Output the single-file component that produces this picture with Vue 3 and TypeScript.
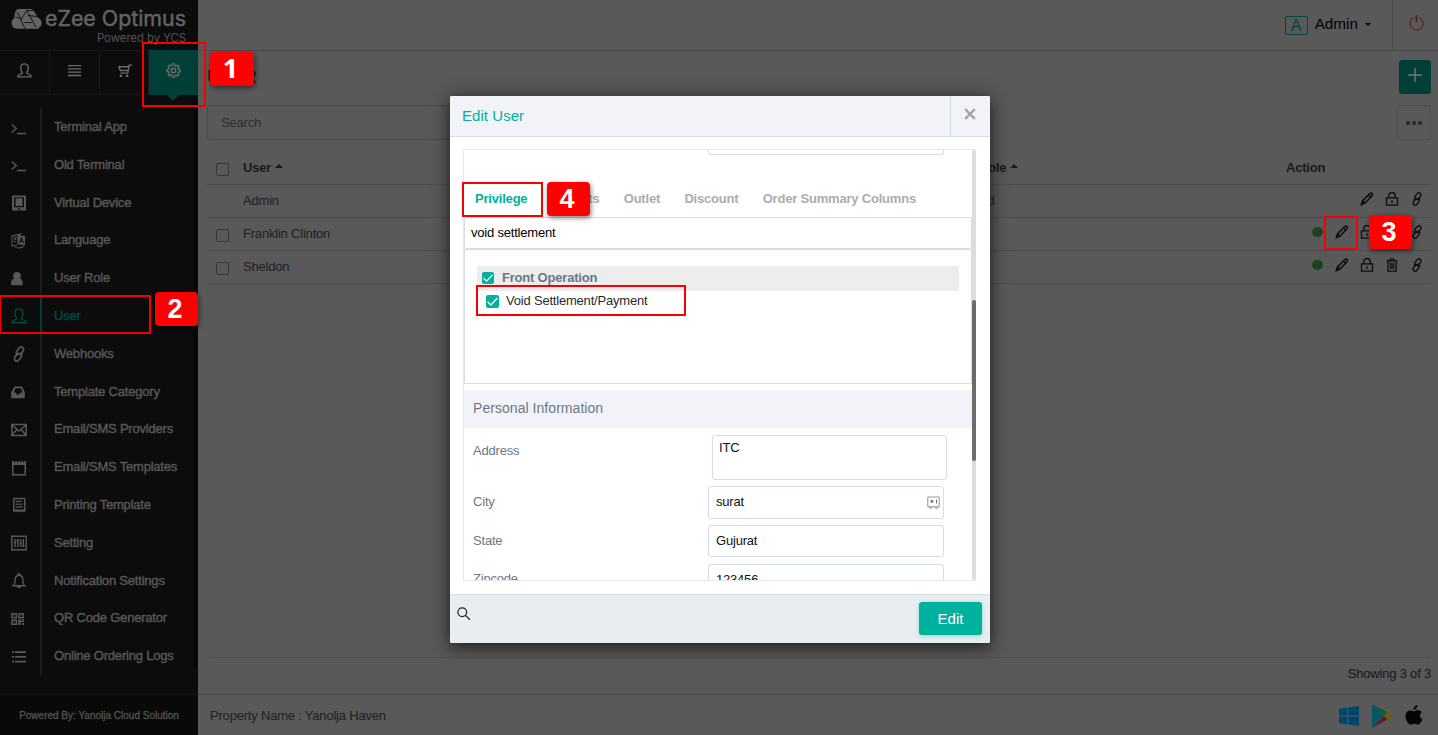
<script setup lang="ts">
interface Icon {
  stroke?: string
  fill?: string
  width?: number
}
interface MenuItem {
  label: string
  icon: string
  active?: boolean
}
interface UserRow {
  name: string
  checkbox: boolean
  actions: string[]
}

const icons: Record<string, Icon> = {
  user: { stroke: 'M1 14.700V13.600c0-1.700 4.700-1.300 4.700-3.100C4.400 9 3.900 7.600 4 5.200 4.100 2.400 5.600.9 8 .9s3.900 1.500 4 4.300c.1 2.400-.4 3.800-1.700 5.300 0 1.800 4.700 1.400 4.700 3.100v1.100z', width: 1.4 },
  bars: { fill: 'M1 2h14v1.500H1zM1 5.500h14V7H1zM1 9h14v1.500H1zM1 12.500h14V14H1z' },
  cart: { fill: 'M15.700 1.500v1.700h-2L12.300 10l-.3 1.500H3.700V10h7.200l.3-1.300H3L1 3.200h11l.4-1.700zM3.200 4.700l.9 2.500h7.300l.4-2.500zM3 12.500h2.500V15H3zM9.500 12.500H12V15H9.500z' },
  gear: { stroke: 'M6.900 1h2.200l.4 1.900 1.200.5 1.600-1.100 1.500 1.500-1.100 1.600.5 1.200 1.900.4v2.200l-1.900.4-.5 1.200 1.100 1.600-1.500 1.500-1.600-1.100-1.200.5L9.100 15H6.900l-.4-1.900-1.200-.5-1.600 1.100-1.500-1.500 1.100-1.600-.5-1.200L.9 9V6.900l1.900-.4.5-1.200-1.100-1.600 1.500-1.500 1.600 1.100 1.200-.5zM10.400 8a2.400 2.400 0 1 1-4.800 0 2.400 2.400 0 0 1 4.800 0z', width: 1.4 },
  terminal: { stroke: 'M.8 4.500l4.400 4-4.400 4M6 13.500h9.200', width: 1.5 },
  tablet: { fill: 'M2 .5h12q1 0 1 1v13q0 1-1 1H2q-1 0-1-1v-13q0-1 1-1zM3 2.200v10h10v-10zM4.500 3.300h7v7.800h-7zM6.800 13.200h2.600v1.200H6.800z' },
  language: { fill: 'M6.500 2l7.500 1.200v9.300L6.500 11zM10 4.400L7.900 9.700l1.200.2.4-1.200 1.900.3.5 1.300 1.200.2L11 4.600zM10.300 6l.7 1.900-1.300-.2zM.5 2.500l10-2.200v1.200L1.500 3.500v9l5-1v1L.5 13.700zM3 4.500l3-.6V5H4.800l.8 1.500-.7.700-.6-1L3.500 8l1.500.7-.4 1-2-1L3.500 5.500 3 5.400zM3 13.500q5 2.500 9.500-.7v1.100q-4.500 3-9.500.2z' },
  person: { fill: 'M6 1a3.700 3.700 0 0 1 2.600 6.500C11 7.900 11.700 9.500 11.700 12v1.300q0 1-1 1H1.100q-1 0-1-1V12C.1 9.500.9 7.900 3.400 7.500A3.700 3.700 0 0 1 6 1z' },
  link: { stroke: 'M6.700 9.300C4.400 8 5 6.300 6.200 4.500l1.500-2c1-1.400 2.300-2 3.700-1.200s1.500 2.300.6 3.700l-1.500 2.200c-.9 1.300-2 1.700-3.100 1.100M9.300 6.700c2.300 1.300 1.700 3 .5 4.800l-1.500 2c-1 1.400-2.300 2-3.700 1.200s-1.500-2.300-.6-3.700l1.500-2.200c.9-1.300 2-1.700 3.100-1.100', width: 1.6 },
  inbox: { fill: 'M3.500 2.500h7.500L13.800 8.500v5q0 .8-.8.800H1q-.8 0-.8-.8v-5zM4.500 4.300L2.700 8.500h2.100l1 1.900h2.700l1-1.900h2L10 4.300z' },
  mail: { stroke: 'M.8 2.500h14.400v11H.8zM1 3l7 6 7-6M1 13l5-5.500M15 13l-5-5.500', width: 1.5 },
  notes: { fill: 'M1 1h14v14.500H1zM2.500 5v9h11V5zM3 1v1.500h1.300V1zM6 1v1.500h1.300V1zM9 1v1.500h1.300V1zM12 1v1.500h1.300V1z' },
  receipt: { fill: 'M2 .8h12.500v14.500l-1.600-1-1.500 1-1.500-1-1.500 1-1.500-1-1.500 1-1.500-1-1.700 1zM3.500 2.300v10.200H13V2.300zM4.700 3.700h6V5h-6zM4.700 6.400h7v1.300h-7zM4.700 9.200h7v1.300h-7z' },
  sliders: { stroke: 'M.8 1.200h14.400v13.600H.8zM4 4v8M6.800 4v8M9.600 4v8M12.300 4v8M2.800 7.500h2.400M5.700 5.500h2.200M8.500 8.500h2.200M11 10.800h2.600', width: 1.4 },
  bell: { stroke: 'M1.200 12.800h13.600M2.800 12.500c1.200-1.500 1-2.800 1.200-5C4.200 4.200 5.700 2.300 8 2.300s3.800 1.900 4 5.200c.2 2.200 0 3.500 1.200 5M7.300 2.200V1h1.400v1.200M6.400 13.500c.6 1.500 2.600 1.500 3.200 0', width: 1.4 },
  qr: { fill: 'M.2 2h6v5.500h-6zM1.700 3.500V6h3V3.500zM7.200 2h5.700v5.500H7.200zM8.700 3.500V6h2.700V3.500zM.2 8.500h6V14h-6zM1.700 10v2.500h3V10zM7.200 8.500H10V10h1V8.500h2V11H9.500v3H7.200zM11 12h2v2h-2zM2.700 4.300h1v1h-1zM9.600 4.300h1v1h-1zM2.700 10.800h1v1h-1z' },
  list: { fill: 'M1 2.300h2v1.800H1zM4 2.300h11v1.800H4zM1 7h2v1.800H1zM4 7h11v1.800H4zM1 11.700h2v1.800H1zM4 11.700h11v1.800H4z' },
  pencil: { stroke: 'M1.600 14.400l1.300-4.200 8-8.200c1-.9 1.900-1.100 2.800-.3s.7 1.800-.2 2.800l-7.900 8.300zM10 3.700l2.300 2.100M3 10.300l2.400 2.400M1.700 14.300l1.700-.5', width: 1.800 },
  lock: { stroke: 'M1.700 6.800h12.600v8.200H1.700zM4.300 6.800V4.300a3.700 3.700 0 0 1 7.400 0v2.500M8 9.500v3', width: 1.5 },
  trash: { stroke: 'M1.800 3.200h12.400M5.700 3V1.200h4.600V3M3.200 3.500V15h9.600V3.500M6 5.500v7M8 5.500v7M10 5.500v7', width: 1.4 },
  search: { stroke: 'M11 6a5 5 0 1 1-10 0 5 5 0 0 1 10 0zM9.700 9.600l5 5', width: 1.4 },
}

const tabs: string[] = ['user', 'bars', 'cart', 'gear']

const menu: MenuItem[] = [
  { label: 'Terminal App', icon: 'terminal' },
  { label: 'Old Terminal', icon: 'terminal' },
  { label: 'Virtual Device', icon: 'tablet' },
  { label: 'Language', icon: 'language' },
  { label: 'User Role', icon: 'person' },
  { label: 'User', icon: 'user', active: true },
  { label: 'Webhooks', icon: 'link' },
  { label: 'Template Category', icon: 'inbox' },
  { label: 'Email/SMS Providers', icon: 'mail' },
  { label: 'Email/SMS Templates', icon: 'notes' },
  { label: 'Printing Template', icon: 'receipt' },
  { label: 'Setting', icon: 'sliders' },
  { label: 'Notification Settings', icon: 'bell' },
  { label: 'QR Code Generator', icon: 'qr' },
  { label: 'Online Ordering Logs', icon: 'list' },
]

const users: UserRow[] = [
  { name: 'Admin', checkbox: false, actions: ['pencil', 'lock', 'link'] },
  { name: 'Franklin Clinton', checkbox: true, actions: ['dot', 'pencil', 'lock', 'trash', 'link'] },
  { name: 'Sheldon', checkbox: true, actions: ['dot', 'pencil', 'lock', 'trash', 'link'] },
]

const privilegeTabs: string[] = ['Privilege', 'Reports', 'Outlet', 'Discount', 'Order Summary Columns']
</script>

<template>
  <div class="page">
    <aside class="side">
      <svg class="logo" viewBox="0 0 198 50">
        <path d="M19 9h11.500q2.200 0 3.400 2l3.900 6.500a5.700 5.700 0 0 1-4.300 11.200H17.500A5.600 5.600 0 0 1 14 18.500l1-5.500q1-4 4-4z" fill="#636363" />
        <path d="M15.500 17.200q3.200-.4 5 2.300l4.500 8.800M17 12l4.500 7.500M33.500 10.500l-6.800 0-5.600 9M26.700 10.500l9.500 17M24.500 22.500h7.500M28 15.500l8.700 1" stroke="#0c0c0c" stroke-width=".9" fill="none" />
        <text x="45" y="26" font-size="21" textLength="141" lengthAdjust="spacingAndGlyphs" stroke="#646464" stroke-width=".45">eZee Optimus</text>
        <text x="97" y="42" font-size="12" font-weight="300" textLength="89" lengthAdjust="spacingAndGlyphs">Powered by YCS</text>
      </svg>
      <nav class="tabs">
        <div v-for="t in tabs" :key="t" class="tab" :class="{ on: t === 'gear' }">
          <svg viewBox="0 0 16 16">
            <path v-if="icons[t].stroke" :d="icons[t].stroke" :stroke-width="icons[t].width" class="line" />
            <path v-if="icons[t].fill" :d="icons[t].fill" class="solid" />
          </svg>
        </div>
      </nav>
      <div class="menu">
        <div v-for="m in menu" :key="m.label" class="item" :class="{ active: m.active }">
          <div class="ico">
            <svg viewBox="0 0 16 16">
              <path v-if="icons[m.icon].stroke" :d="icons[m.icon].stroke" :stroke-width="icons[m.icon].width" class="line" />
              <path v-if="icons[m.icon].fill" :d="icons[m.icon].fill" class="solid" />
            </svg>
          </div>
          <span>{{ m.label }}</span>
        </div>
        <i class="rail"></i>
      </div>
      <div class="powered">Powered By: Yanolja Cloud Solution</div>
    </aside>

    <main class="main">
      <header class="top">
        <span class="avatar">A</span><span class="who">Admin</span><i class="caret"></i>
        <div class="power">
          <svg viewBox="0 0 18 18"><path d="M6 2.700a7 7 0 1 0 6 0" fill="none" stroke="#5b2625" stroke-width="1.300" /><path d="M9 .5v7" stroke="#5b1d1c" stroke-width="2" /></svg>
        </div>
      </header>
      <section class="content">
        <div class="title"><span>USER</span>
          <button class="add"><svg viewBox="0 0 14 14"><path d="M7 0v14M0 7h14" stroke="#777" stroke-width="1.400" /></svg></button>
        </div>
        <div class="filter"><div class="search">Search</div><div class="more"><i></i><i></i><i></i></div></div>
        <div class="row head">
          <div class="check"><i></i></div>
          <div class="name">User<i class="up"></i></div>
          <div class="role">Role<i class="up"></i></div>
          <div class="act">Action</div>
        </div>
        <div v-for="u in users" :key="u.name" class="row">
          <div class="check"><i v-if="u.checkbox"></i></div>
          <div class="name">{{ u.name }}</div>
          <div class="role"><template v-if="u.name === 'Admin'">Ad</template></div>
          <div class="acts">
            <template v-for="a in u.actions" :key="a">
              <i v-if="a === 'dot'" class="dot"></i>
              <svg v-else viewBox="0 0 16 16"><path :d="icons[a].stroke" :stroke-width="icons[a].width" class="line" /></svg>
            </template>
          </div>
        </div>
        <div class="fillspace"></div>
        <div class="showing">Showing 3 of 3</div>
      </section>
      <footer class="foot">
        <span>Property Name : Yanolja Haven</span>
        <div class="stores">
          <svg width="20" height="20" viewBox="0 0 20 20"><path fill="#00466b" d="M0 2.800l8.200-1.200v7.900H0zM9.200 1.400L20 0v9.500H9.200zM0 10.500h8.200v7.900L0 17.200zM9.200 10.500H20V20L9.200 18.600z" /></svg>
          <svg class="play" width="21" height="24" viewBox="0 0 21 24"><path fill="#075667" d="M0 0l12 12L0 24z" /><path fill="#006137" d="M0 0l15.500 8.500L12 12z" /><path fill="#735d00" d="M15.500 8.500L21 12l-5.500 3.500L12 12z" /><path fill="#6b1722" d="M0 24l15.500-8.500L12 12z" /></svg>
          <svg width="18" height="21" viewBox="0 0 18 21"><path fill="#050505" d="M12.500 0c.2 2.500-1.600 4.600-4 4.700C8.300 2.300 10.200.3 12.500 0zM16.800 7.200c-2.800 1.800-2.400 5.500.7 6.800-.6 2-2.300 5-3.900 5.500-1.600.4-2.400-.7-4.100-.7-1.900 0-2.700 1.200-4.200.8C2.800 18.800.2 14.500.5 10.700.8 6.300 4.500 4.600 7 5.700c1.500.7 2 .7 3.700 0 2.300-.9 4.700-.4 6.100 1.500z" /></svg>
        </div>
      </footer>
    </main>

    <div class="modal">
      <div class="mhead"><span>Edit User</span><div class="close"><svg viewBox="0 0 12 12"><path d="M1.200 1.200l9.600 9.600M10.800 1.200l-9.600 9.600" stroke="#a6a6a6" stroke-width="2.500" /></svg></div></div>
      <div class="mbody">
        <div class="scroll">
          <div class="pane">
            <div class="cut"></div>
            <div class="ptabs"><span v-for="(p, i) in privilegeTabs" :key="p" :class="{ sel: i === 0 }">{{ p }}</span></div>
            <div class="query">void settlement</div>
            <div class="list">
              <div class="group"><b class="cb"><svg viewBox="0 0 12 12"><path d="M1.500 6.200l3 3 6-6.400" /></svg></b>Front Operation</div>
              <div class="leaf"><b class="cb"><svg viewBox="0 0 12 12"><path d="M1.500 6.200l3 3 6-6.400" /></svg></b>Void Settlement/Payment</div>
            </div>
            <div class="section">Personal Information</div>
            <div class="field addr"><label>Address</label><div class="input area">ITC</div></div>
            <div class="field city"><label>City</label><div class="input">surat
              <svg class="vault" viewBox="0 0 13 13"><path d="M.8 1h11.400v9.800H.8zM1.800 10.800l1 1.500h1.500l.8-1.500M7.900 10.800l.8 1.500h1.500l1-1.500" fill="none" stroke="#959595" /><path d="M4.900 3l.6 1.600h1.700L5.900 5.700l.5 1.600-1.500-.9-1.500.9.500-1.600-1.300-1.100h1.700zM9 3.500h1v4H9z" fill="#777" /></svg>
            </div></div>
            <div class="field state"><label>State</label><div class="input">Gujurat</div></div>
            <div class="field zip"><label>Zipcode</label><div class="input">123456</div></div>
          </div>
          <div class="track"><i></i></div>
        </div>
      </div>
      <div class="mfoot">
        <svg viewBox="0 0 16 16"><path :d="icons.search.stroke" :stroke-width="icons.search.width" class="line" /></svg>
        <button>Edit</button>
      </div>
    </div>

    <i class="mark m1"></i><i class="mark m2"></i><i class="mark m3"></i><i class="mark m4"></i><i class="mark m5"></i>
    <b class="step s1">1</b><b class="step s2">2</b><b class="step s3">3</b><b class="step s4">4</b>
  </div>
</template>

<style>
body { overflow: hidden; }
</style>

<style scoped>
* { box-sizing: border-box; }
.page { position: relative; display: flex; width: 1438px; height: 735px; overflow: hidden; background: #595959; font-family: "Liberation Sans", Arial, sans-serif; font-size: 13px; letter-spacing: -.2px; color: #202020; }
svg { display: block; }
.line { fill: none; stroke: currentColor; }
.solid { fill: currentColor; fill-rule: evenodd; }
button { border: 0; padding: 0; font-family: inherit; }

.side { width: 198px; height: 735px; background: #0c0c0c; display: flex; flex-direction: column; color: #585858; }
.logo { width: 198px; height: 50px; font-family: Inter, sans-serif; letter-spacing: 0; fill: #646464; flex: none; }
.tabs { display: grid; grid-template-columns: 50px 50px 49px 49px; height: 45px; border-top: 1px solid #171717; border-bottom: 1px solid #171717; flex: none; }
.tab { display: flex; justify-content: center; padding-top: 12px; border-right: 1px solid #191919; color: #6b6b6b; }
.tab svg { width: 15px; height: 15px; }
.tab.on { position: relative; background: #003f38; border: 0; margin: -1px 0; padding-top: 13px; }
.tab.on::after { content: ""; position: absolute; left: 18px; top: 45px; border: 6px solid transparent; border-top-color: #003f38; border-bottom: 0; }
.menu { position: relative; padding-top: 13px; height: 599px; flex: none; }
.rail { position: absolute; right: 1px; top: 2px; width: 4px; height: 571px; background: #070707; }
.item { display: flex; height: 37.8px; }
.ico { width: 42px; border-right: 2px solid #1c1c1c; padding: 11.5px 0 0 11px; }
.ico svg { width: 16px; height: 16px; }
.item span { padding: 11px 0 0 12px; line-height: 15px; -webkit-text-stroke: .4px #585858; letter-spacing: -.2px; white-space: nowrap; }
.item.active { color: #004b43; }
.item.active .ico { border-color: #003f38; }
.item.active span { -webkit-text-stroke-color: #004b43; }
.powered { height: 41px; border-top: 1px solid #131313; background: #090909; font-size: 10px; letter-spacing: 0; line-height: 41px; text-align: center; -webkit-text-stroke: .3px #505050; flex: none; }

.main { flex: 1; display: flex; flex-direction: column; }
.top { height: 51px; border-bottom: 1px solid #48494e; display: flex; justify-content: flex-end; align-items: center; flex: none; letter-spacing: 0; }
.avatar { width: 23px; height: 19px; border: 1px solid #00473f; border-radius: 2px; color: #004940; font-size: 16px; line-height: 18px; text-align: center; }
.who { margin: 0 0 2px 7px; font-size: 15.3px; color: #000; }
.caret { border: 3px solid transparent; border-top-color: #000; border-bottom: 0; margin: 0 21px 2px 7px; }
.power { width: 46px; height: 50px; border-left: 1px solid #4b4c50; padding: 15px 0 0 15px; }
.power svg { width: 17px; height: 17px; }
.content { height: 643px; padding: 0 7px 0 9px; display: flex; flex-direction: column; }
.title { height: 54px; display: flex; justify-content: space-between; padding-top: 9px; font-size: 18px; letter-spacing: 0; line-height: 34px; flex: none; }
.add { width: 32px; height: 34px; border-radius: 3px; background: #003f38; display: flex; justify-content: center; padding-top: 8px; }
.add svg { width: 14px; height: 14px; }
.filter { height: 47px; display: flex; justify-content: space-between; flex: none; }
.search { width: 400px; height: 35px; border: 1px solid #494a4d; border-radius: 3px; padding-left: 13px; line-height: 33px; color: #2e2e2e; }
.more { width: 34px; height: 35px; border: 1px solid #4e4e4f; border-radius: 3px; display: flex; gap: 2px; justify-content: center; align-items: center; }
.more i { width: 4px; height: 4px; border-radius: 50%; background: #25282b; }
.row { height: 33px; border-bottom: 1px solid #4b4c4e; display: flex; line-height: 32px; flex: none; }
.head { font-weight: bold; color: #1a1a1a; }
.check { width: 36px; padding: 11px 0 0 9px; }
.check i { display: block; width: 13px; height: 13px; border: 1px solid #363636; border-radius: 2px; }
.name { width: 736px; }
.role { width: 307px; }
.up { display: inline-block; border: 4px solid transparent; border-bottom-color: #1a1a1a; border-top: 0; margin: 0 0 4px 4px; }
.acts { flex: 1; display: flex; justify-content: flex-end; align-items: center; gap: 11px; padding: 0 7px 5px 0; color: #0d0d0d; }
.acts svg { width: 14px; height: 14px; }
.dot { width: 11px; height: 10px; border-radius: 50%; background: #1c431d; margin-right: 1px; }
.fillspace { flex: 1; border-bottom: 1px solid #4f4f50; border-radius: 0 0 4px 4px; }
.showing { height: 36px; line-height: 31px; text-align: right; flex: none; color: #171717; }
.foot { height: 41px; border-top: 1px solid #48494e; display: flex; justify-content: space-between; padding: 0 15px 0 12px; line-height: 41px; }
.stores { display: flex; align-items: center; gap: 13px; padding-top: 1px; }
.play { margin-right: -1px; }

.modal { position: absolute; left: 450px; top: 96px; width: 540px; height: 547px; background: #fff; border-radius: 2px; box-shadow: 0 5px 15px rgba(0, 0, 0, .5), 0 0 20px rgba(0, 0, 0, .3); display: flex; flex-direction: column; overflow: hidden; }
.mhead { height: 41px; background: #f2f3f8; border-bottom: 1px solid #d3dde5; display: flex; justify-content: space-between; padding-left: 12px; font-size: 15px; letter-spacing: .05px; line-height: 40px; color: #00b19d; flex: none; }
.close { width: 40px; border-left: 1px solid #d3dde5; padding: 12px 0 0 13px; }
.close svg { width: 12px; height: 12px; }
.mbody { padding: 12px 13px 0; height: 457px; flex: none; }
.scroll { height: 432px; border: 1px solid #e8e9ea; border-right: 0; display: flex; overflow: hidden; }
.pane { width: 508px; flex: none; }
.cut { width: 236px; height: 5px; margin-left: 244px; border: 1px solid #d3dde8; border-top: 0; border-radius: 0 0 3px 3px; }
.ptabs { display: flex; height: 62px; padding: 34px 0 0 11px; gap: 24.3px; font-weight: bold; color: #acacac; line-height: 19px; white-space: nowrap; }
.ptabs .sel { color: #00b19d; }
.query { height: 32px; border: 1px solid #d3dde8; border-radius: 2px; line-height: 30px; padding-left: 6px; color: #000; }
.list { height: 135px; border: 1px solid #d3dde8; padding: 16px 12px 0; }
.group { height: 25px; background: #ededed; font-weight: bold; color: #6b7789; line-height: 24px; display: flex; padding-left: 5px; gap: 8px; }
.leaf { display: flex; gap: 7px; padding-left: 9px; line-height: 20px; height: 24px; color: #2b2b2b; }
.cb { width: 12px; height: 12px; background: #00b19d; border-radius: 2px; margin-top: 6px; flex: none; }
.leaf .cb { width: 13px; height: 13px; margin-top: 4px; }
.cb path { fill: none; stroke: #fff; stroke-width: 1.2; }
.section { height: 38px; margin-top: 6px; background: #f2f3f8; padding-left: 9px; font-size: 14px; letter-spacing: .05px; line-height: 37px; color: #6b7789; }
.field { display: flex; color: #6b7789; }
.field label { width: 244px; padding-left: 9px; line-height: 31px; }
.input { position: relative; width: 236px; height: 32px; border: 1px solid #d3dde8; border-radius: 3px; padding-left: 7px; line-height: 30px; color: #111; }
.addr { margin-top: 7px; height: 51px; }
.area { margin-left: 4px; width: 235px; height: 45px; line-height: 24px; padding-left: 6px; }
.city { height: 39px; }
.city .input { height: 33px; }
.state { height: 39px; }
.zip label, .zip .input { line-height: 29px; }
.vault { position: absolute; right: 3px; top: 9px; width: 13px; height: 13px; }
.track { width: 4px; background: #dcdcdc; border-radius: 2px; padding-top: 150px; flex: none; }
.track i { display: block; width: 4px; height: 161px; background: #6c6c6c; border-radius: 2px; }
.mfoot { height: 49px; background: #e9edf0; border-top: 1px solid #d3dde5; display: flex; justify-content: space-between; padding: 7px 8px 0 7px; flex: none; color: #222; }
.mfoot svg { width: 14px; height: 14px; margin-top: 5px; }
.mfoot button { width: 63px; height: 33px; border-radius: 3px; background: #00b19d; color: #fff; font-size: 15px; box-shadow: 0 1px 4px rgba(0, 177, 157, .4); }

.mark { position: absolute; border: 2px solid #f80000; }
.m1 { left: 142px; top: 42px; width: 64px; height: 65px; }
.m2 { left: -1px; top: 295px; width: 152px; height: 39px; }
.m3 { left: 1324px; top: 216px; width: 34px; height: 34px; }
.m4 { left: 462px; top: 182px; width: 81px; height: 35px; }
.m5 { left: 476px; top: 285px; width: 210px; height: 31px; }
.step { position: absolute; width: 43px; height: 34px; border-radius: 4px; background: #fe0000; color: #fff; font-size: 27px; letter-spacing: 0; line-height: 34px; padding-right: 3px; text-align: center; box-shadow: 1px 2px 5px rgba(0, 0, 0, .5); }
.s1 { left: 210px; top: 52px; width: 44px; font-family: "Open Sans", sans-serif; line-height: 32px; }
.s2 { left: 155px; top: 292px; }
.s3 { left: 1369px; top: 215px; }
.s4 { left: 547px; top: 182px; }
</style>
